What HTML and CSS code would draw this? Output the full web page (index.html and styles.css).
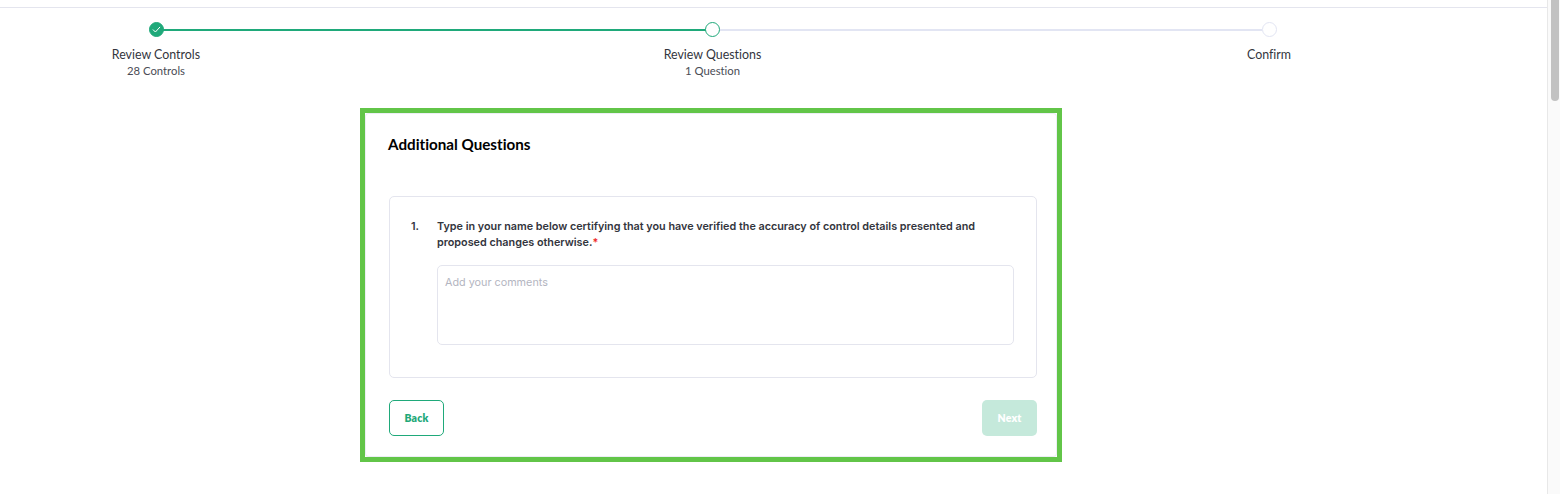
FILE: index.html
```html
<!DOCTYPE html>
<html lang="en">
<head>
<meta charset="utf-8">
<title>Additional Questions</title>
<link rel="stylesheet" href="styles.css">
</head>
<body>
<div class="page">
  <main class="main">
    <div class="topbar"></div>
    <ol class="stepper">
      <li class="step">
        <span class="dot dot-done">
          <svg width="9" height="9" viewBox="0 0 9 9" fill="none"><path d="M1.2 4.8 3.4 7 7.8 2.2" stroke="#fff" stroke-width="1" stroke-linecap="round" stroke-linejoin="round"/></svg>
        </span>
        <span class="step-title">Review Controls</span>
        <span class="step-sub">28 Controls</span>
      </li>
      <li class="link link-done"></li>
      <li class="step">
        <span class="dot dot-current"></span>
        <span class="step-title">Review Questions</span>
        <span class="step-sub">1 Question</span>
      </li>
      <li class="link"></li>
      <li class="step">
        <span class="dot"></span>
        <span class="step-title">Confirm</span>
      </li>
    </ol>
    <section class="frame">
      <div class="card">
        <h1 class="card-title">Additional Questions</h1>
        <div class="question">
          <span class="q-num">1.</span>
          <div class="q-body">
            <p class="q-text">Type in your name below certifying that you have verified the accuracy of control details presented and proposed changes otherwise.<span class="req">*</span></p>
            <textarea class="q-input" placeholder="Add your comments"></textarea>
          </div>
        </div>
        <div class="actions">
          <button class="btn btn-back" type="button">Back</button>
          <button class="btn btn-next" type="button">Next</button>
        </div>
      </div>
    </section>
  </main>
  <aside class="scrollbar"><div class="thumb"></div></aside>
</div>
</body>
</html>
```
FILE: styles.css
```css
* { box-sizing: border-box; }
html, body { margin: 0; height: 100%; overflow: hidden; background: #fff; }
.page { display: flex; height: 494px; }
.main { flex: 1; min-width: 0; }
.topbar { height: 8px; border-bottom: 1px solid #e4e5ee; }
.stepper {
  list-style: none;
  margin: 14px 0 0;
  padding: 0 0 0 106px;
  display: flex;
  width: 1319px;
  height: 86px;
  font-family: "Lato", sans-serif;
  font-variant-ligatures: none;
  color: #33353d;
}
.step { width: 100px; flex: none; display: flex; flex-direction: column; align-items: center; position: relative; z-index: 1; }
.link { flex: 1; height: 2px; margin: 7px -43px 0; background: #e2e5f3; }
.link-done { background: #1fa97a; }
.dot {
  width: 15px; height: 15px; border-radius: 50%;
  border: 1px solid #e2e5f3; background: #fff;
  display: flex; align-items: center; justify-content: center;
}
.dot-done { background: #1fa97a; border-color: #1fa97a; }
.dot-current { border-color: #1fa97a; }
.step-title { margin-top: 10px; font-size: 12.4px; line-height: 16px; white-space: nowrap; }
.step-sub { margin-top: 0; font-size: 11.3px; line-height: 16px; white-space: nowrap; color: #4a4c55; }
.frame {
  width: 702px; height: 354px; margin-left: 360px;
  border: 5px solid #62c548;
}
.card {
  height: 100%;
  padding: 23px 20px 0 24px;
  border-radius: 4px;
  box-shadow: inset 0 0 0 1px #eceef5;
  display: flex; flex-direction: column;
}
.card-title { margin: 0 0 0 -1px; font: 700 15.2px/16px "Lato", sans-serif; font-variant-ligatures: none; color: #000; }
.question {
  margin-top: 44px;
  height: 182px;
  border: 1px solid #e4e5ee;
  border-radius: 5px;
  padding: 21px 22px 0 21px;
  display: flex;
  font-family: "Inter", sans-serif;
}
.q-num { width: 26px; flex: none; font-size: 10.8px; font-weight: 600; line-height: 16px; color: #33353d; padding-top: 1px; }
.q-body { flex: 1; min-width: 0; }
.q-text { margin: 0; padding-top: 1px; font-size: 10.8px; font-weight: 600; line-height: 16px; color: #33353d; }
.req { color: #ef2b2b; }
.q-input {
  display: block; width: 100%; height: 80px; margin-top: 14px;
  padding: 10px 7px; resize: none;
  border: 1px solid #e4e5ee; border-radius: 5px; outline: none;
  font: 400 10.8px/14px "Inter", sans-serif;
}
.q-input::placeholder { color: #b3b5bf; opacity: 1; }
.actions { margin-top: 22px; display: flex; justify-content: space-between; }
.btn { height: 36px; width: 55px; padding: 0; border-radius: 5px; font: 800 10.5px/1 "Lato", sans-serif; letter-spacing: 0.2px; }
.btn-back { background: #fff; border: 1px solid #1fa97a; color: #1fa97a; }
.btn-next { background: #c5e9db; border: 0; color: #fff; }
.scrollbar { width: 13px; flex: none; background: #fafafa; border-left: 1px solid #e8e8e8; padding: 0 1px 0 3px; }
.thumb { height: 101px; border-radius: 0 0 4px 4px; background: #c2c2c2; }
```
